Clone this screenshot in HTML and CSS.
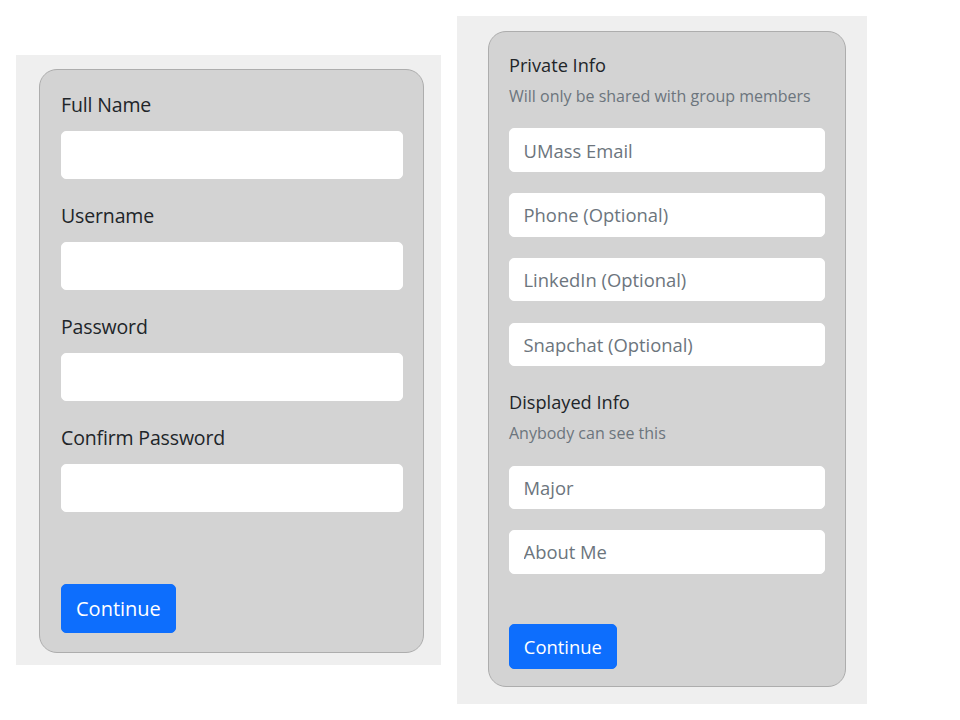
FILE: index.html
```html
<!DOCTYPE html>
<html lang="en">
<head>
<meta charset="utf-8">
<title>Sign up</title>
<link rel="stylesheet" href="styles.css">
</head>
<body>
<main class="stage">
  <section class="panel panel--account">
    <form class="card card--account">
      <div class="field">
        <label class="field-label" for="fullname">Full Name</label>
        <input class="input-lg" id="fullname" type="text">
      </div>
      <div class="field">
        <label class="field-label" for="username">Username</label>
        <input class="input-lg" id="username" type="text">
      </div>
      <div class="field">
        <label class="field-label" for="password">Password</label>
        <input class="input-lg" id="password" type="password">
      </div>
      <div class="field">
        <label class="field-label" for="confirm">Confirm Password</label>
        <input class="input-lg" id="confirm" type="password">
      </div>
      <div class="actions actions--account">
        <button class="btn btn-lg" type="button">Continue</button>
      </div>
    </form>
  </section>

  <section class="panel panel--info">
    <form class="card card--info">
      <h5 class="section-title">Private Info</h5>
      <p class="section-sub">Will only be shared with group members</p>
      <div class="input-stack">
        <input class="input-md" type="email" placeholder="UMass Email">
        <input class="input-md" type="text" placeholder="Phone (Optional)">
        <input class="input-md" type="text" placeholder="LinkedIn (Optional)">
        <input class="input-md" type="text" placeholder="Snapchat (Optional)">
      </div>
      <h5 class="section-title section-title--spaced">Displayed Info</h5>
      <p class="section-sub section-sub--tight">Anybody can see this</p>
      <div class="input-stack">
        <input class="input-md" type="text" placeholder="Major">
        <input class="input-md" type="text" placeholder="About Me">
      </div>
      <div class="actions actions--info">
        <button class="btn btn-md" type="button">Continue</button>
      </div>
    </form>
  </section>
</main>
</body>
</html>
```

FILE: styles.css
```css
* {
  box-sizing: border-box;
}

html, body {
  margin: 0;
  padding: 0;
  background: #ffffff;
}

body {
  font-family: "Open Sans", "Noto Sans", sans-serif;
  color: #212529;
}

.stage {
  display: flex;
  align-items: center;
  gap: 16px;
  height: 720px;
  padding-left: 16px;
}

.panel {
  background: #efefef;
}

.panel--account {
  padding: 14px 17px 12px 23px;
}

.panel--info {
  padding: 15px 21px 17px 31px;
}

.card {
  background: #d3d3d3;
  border: 1px solid #adadad;
  border-radius: 18px;
  margin: 0;
}

.card--account {
  width: 385px;
  padding: 20px 20px 19px 21px;
}

.card--info {
  width: 358px;
  padding: 21px 20px 17.4px 20px;
  display: flex;
  flex-direction: column;
}

.field {
  margin-bottom: 22.33px;
}

.field:last-of-type {
  margin-bottom: 0;
}

.field-label {
  display: block;
  font-size: 19.5px;
  letter-spacing: -0.15px;
  line-height: 30px;
  margin-bottom: 11px;
}

input {
  display: block;
  width: 100%;
  background: #ffffff;
  border: 1px solid #ffffff;
  border-radius: 5px;
  font-family: inherit;
  color: #212529;
  outline: none;
}

input::placeholder {
  color: #6c757d;
  opacity: 1;
}

.input-lg {
  height: 48px;
  padding: 0 15px;
  font-size: 20px;
}

.input-md {
  height: 43.4px;
  padding: 0 13.5px;
  font-size: 18.4px;
}

.input-stack {
  display: flex;
  flex-direction: column;
  gap: 21.3px;
}

.section-title {
  margin: 0 0 6.7px;
  font-size: 18.2px;
  line-height: 24px;
  font-weight: 400;
}

.section-title--spaced {
  margin-top: 23.8px;
  margin-bottom: 7.5px;
}

.section-sub {
  margin: 0 0 20.8px;
  font-size: 16px;
  line-height: 24px;
  color: #6c757d;
}

.section-sub--tight {
  margin-bottom: 20.3px;
}

.actions {
  display: flex;
}

.actions--account {
  margin-top: 72px;
}

.actions--info {
  margin-top: 50px;
}

.btn {
  font-family: inherit;
  background: #0d6efd;
  color: #ffffff;
  border: 1px solid #0d6efd;
  border-radius: 5px;
  cursor: pointer;
}

.btn-lg {
  height: 49px;
  padding: 0 14px;
  font-size: 20px;
}

.btn-md {
  height: 45px;
  padding: 0 13.8px;
  font-size: 18.4px;
}
```
